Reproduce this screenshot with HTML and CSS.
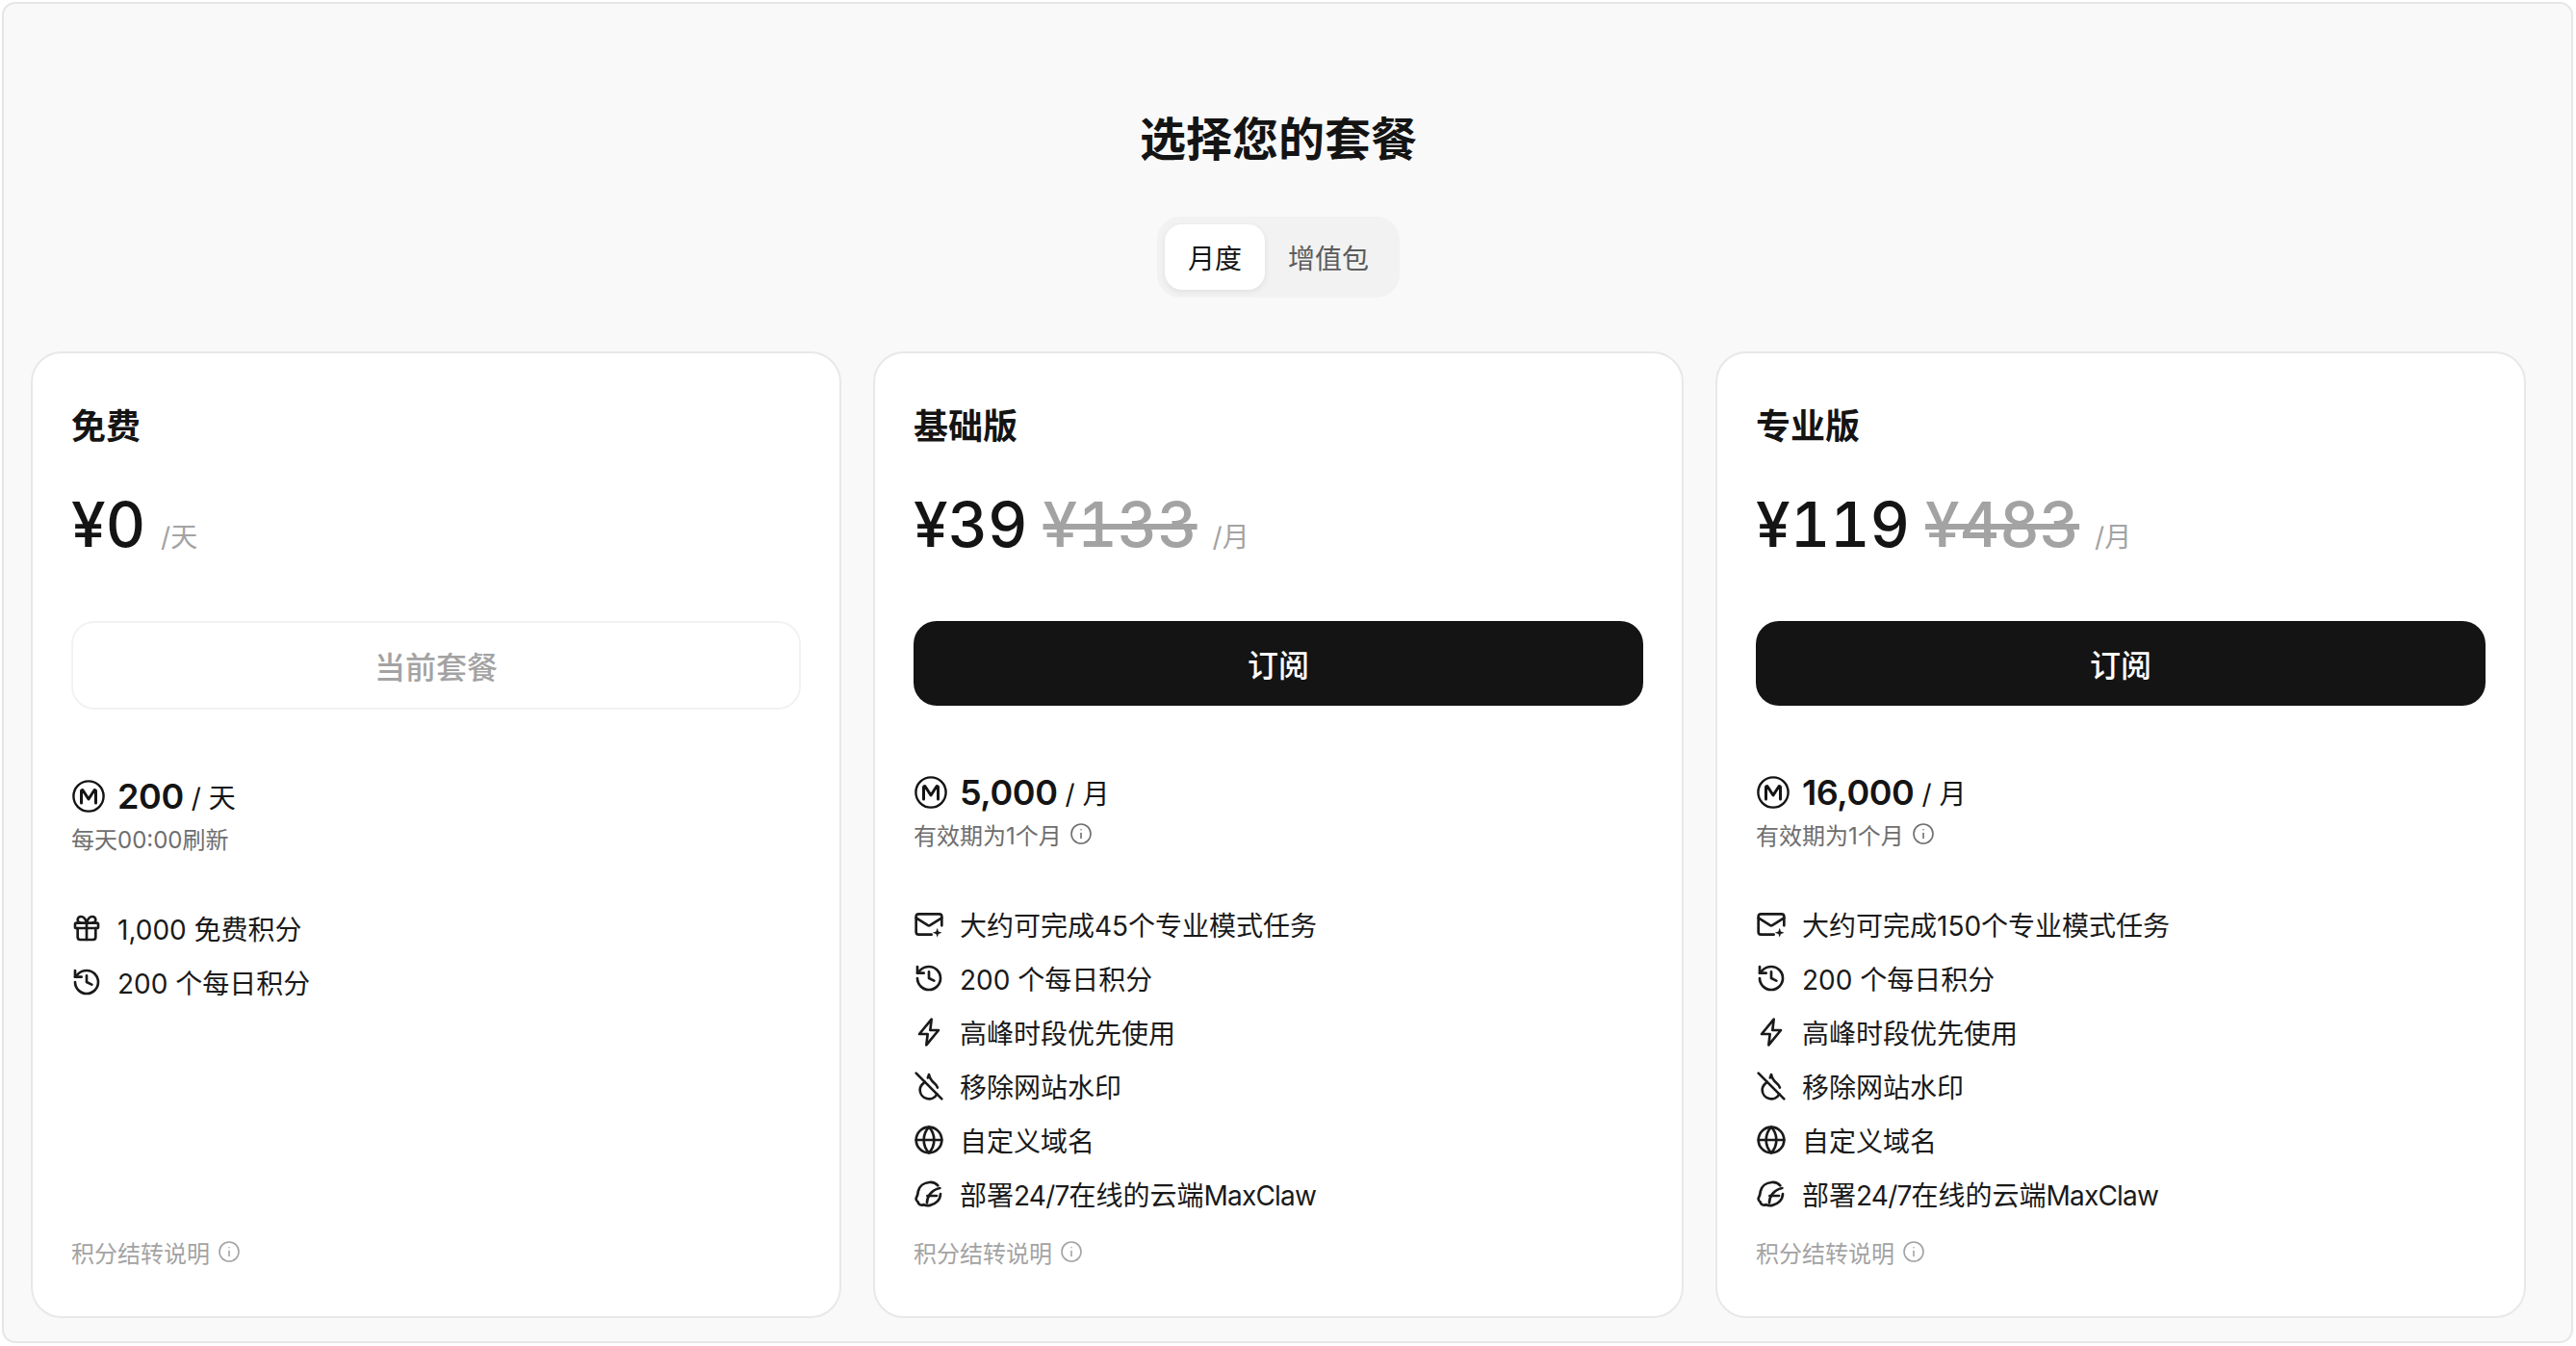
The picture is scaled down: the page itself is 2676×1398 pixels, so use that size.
FILE: index.html
```html
<!DOCTYPE html>
<html lang="zh-CN">
<head>
<meta charset="utf-8">
<title>选择您的套餐</title>
<link rel="stylesheet" href="styles.css">
</head>
<body>
<svg class="defs" width="0" height="0" aria-hidden="true">
  <symbol id="i-m" viewBox="0 0 36 36"><circle cx="18" cy="18" r="15.6" fill="none" stroke="currentColor" stroke-width="2.4"/><path d="M10.5 25V12.5c0-1 1.2-1.3 1.7-.5L18 21l5.8-9c.5-.8 1.7-.5 1.7.5V25" fill="none" stroke="currentColor" stroke-width="3" stroke-linecap="round" stroke-linejoin="round"/></symbol>
  <symbol id="i-info" viewBox="0 0 24 24"><circle cx="12" cy="12" r="10"/><path d="M12 16.5v-5"/><path d="M12 7.8h.01"/></symbol>
  <symbol id="i-mail" viewBox="0 0 24 24"><path d="M22 13V6a2 2 0 0 0-2-2H4a2 2 0 0 0-2 2v12a2 2 0 0 0 2 2h10"/><path d="m22 7-8.97 5.7a1.94 1.94 0 0 1-2.06 0L2 7"/><path class="fill" d="M18.5 14.8l.95 2.75 2.75.95-2.75.95-.95 2.75-.95-2.75-2.75-.95 2.75-.95z"/></symbol>
  <symbol id="i-history" viewBox="0 0 24 24"><path d="M3 12a9 9 0 1 0 9-9 9.75 9.75 0 0 0-6.74 2.74L3 8"/><path d="M3 3v5h5"/><path d="M12 7v5l4 2"/></symbol>
  <symbol id="i-zap" viewBox="0 0 24 24"><path d="M14 2 4.500 13.500H11L10 22l9.500-11.500H13z"/></symbol>
  <symbol id="i-drop" viewBox="0 0 24 24"><path d="M18.715 13.186C18.29 11.858 17.384 10.607 16 9.5c-2-1.6-3.5-4-4-6.5a10.7 10.7 0 0 1-.884 2.586"/><path d="m2 2 20 20"/><path d="M8.795 8.797A11 11 0 0 1 8 9.5C6 11.1 5 13 5 15a7 7 0 0 0 13.222 3.208"/></symbol>
  <symbol id="i-globe" viewBox="0 0 24 24"><circle cx="12" cy="12" r="10"/><path d="M12 2a14.5 14.5 0 0 0 0 20 14.5 14.5 0 0 0 0-20"/><path d="M2 12h20"/></symbol>
  <symbol id="i-gift" viewBox="0 0 24 24"><rect x="3" y="8" width="18" height="4" rx="1"/><path d="M12 8v13"/><path d="M19 12v7a2 2 0 0 1-2 2H7a2 2 0 0 1-2-2v-7"/><path d="M7.5 8a2.5 2.5 0 0 1 0-5A4.8 8 0 0 1 12 8a4.8 8 0 0 1 4.5-5 2.5 2.5 0 0 1 0 5"/></symbol>
  <symbol id="i-claw" viewBox="0 0 24 24"><path d="M19 5.500C17.300 3.600 15 2.800 12.500 3 8 3.300 4.500 6 3.600 10c-.3 1.500-.2 2.700-1 4-.9 1.600-.5 3.400.8 4.300.5 2.200 2.600 3 4.500 2.100 1.500.7 3.300.9 5 .5 4.700-.9 8-4.500 8.100-8.900"/><path d="M10.500 19c0-4.500 3-10 10-11.500"/><path d="M10.800 13.500h7.200"/></symbol>
</svg>
<main class="shell">
  <h1 class="title">选择您的套餐</h1>
  <div class="tabs">
    <button class="tab tab-active">月度</button>
    <button class="tab">增值包</button>
  </div>
  <section class="plans">
    <article class="plan">
      <h2 class="plan-name">免费</h2>
      <div class="price"><span class="amount">¥0</span><span class="unit">/天</span></div>
      <button class="cta cta-current">当前套餐</button>
      <div class="credits">
        <div class="credit-row"><svg class="m-icon"><use href="#i-m"/></svg><b class="credit-num">200</b><span class="credit-unit">/ 天</span></div>
        <div class="credit-note">每天00:00刷新</div>
      </div>
      <ul class="features">
        <li class="feature"><svg class="ficon"><use href="#i-gift"/></svg>1,000 免费积分</li>
        <li class="feature"><svg class="ficon"><use href="#i-history"/></svg>200 个每日积分</li>
      </ul>
      <div class="foot">积分结转说明<svg class="info"><use href="#i-info"/></svg></div>
    </article>
    <article class="plan">
      <h2 class="plan-name">基础版</h2>
      <div class="price"><span class="amount">¥39</span><s class="was">¥133</s><span class="unit">/月</span></div>
      <button class="cta">订阅</button>
      <div class="credits">
        <div class="credit-row"><svg class="m-icon"><use href="#i-m"/></svg><b class="credit-num">5,000</b><span class="credit-unit">/ 月</span></div>
        <div class="credit-note">有效期为1个月<svg class="info"><use href="#i-info"/></svg></div>
      </div>
      <ul class="features">
        <li class="feature"><svg class="ficon"><use href="#i-mail"/></svg>大约可完成45个专业模式任务</li>
        <li class="feature"><svg class="ficon"><use href="#i-history"/></svg>200 个每日积分</li>
        <li class="feature"><svg class="ficon"><use href="#i-zap"/></svg>高峰时段优先使用</li>
        <li class="feature"><svg class="ficon"><use href="#i-drop"/></svg>移除网站水印</li>
        <li class="feature"><svg class="ficon"><use href="#i-globe"/></svg>自定义域名</li>
        <li class="feature"><svg class="ficon"><use href="#i-claw"/></svg><span>部署<span class="tight">24/7</span>在线的云端<span class="tight">MaxClaw</span></span></li>
      </ul>
      <div class="foot">积分结转说明<svg class="info"><use href="#i-info"/></svg></div>
    </article>
    <article class="plan">
      <h2 class="plan-name">专业版</h2>
      <div class="price"><span class="amount">¥119</span><s class="was">¥483</s><span class="unit">/月</span></div>
      <button class="cta">订阅</button>
      <div class="credits">
        <div class="credit-row"><svg class="m-icon"><use href="#i-m"/></svg><b class="credit-num">16,000</b><span class="credit-unit">/ 月</span></div>
        <div class="credit-note">有效期为1个月<svg class="info"><use href="#i-info"/></svg></div>
      </div>
      <ul class="features">
        <li class="feature"><svg class="ficon"><use href="#i-mail"/></svg>大约可完成150个专业模式任务</li>
        <li class="feature"><svg class="ficon"><use href="#i-history"/></svg>200 个每日积分</li>
        <li class="feature"><svg class="ficon"><use href="#i-zap"/></svg>高峰时段优先使用</li>
        <li class="feature"><svg class="ficon"><use href="#i-drop"/></svg>移除网站水印</li>
        <li class="feature"><svg class="ficon"><use href="#i-globe"/></svg>自定义域名</li>
        <li class="feature"><svg class="ficon"><use href="#i-claw"/></svg><span>部署<span class="tight">24/7</span>在线的云端<span class="tight">MaxClaw</span></span></li>
      </ul>
      <div class="foot">积分结转说明<svg class="info"><use href="#i-info"/></svg></div>
    </article>
  </section>
</main>
</body>
</html>
```

FILE: styles.css
```css
* { box-sizing: border-box; }
html, body { margin: 0; height: 100%; background: #fff; }
body {
  padding: 2px 3px 3px 2px;
  font-family: Inter, "Noto Sans CJK SC", sans-serif;
  color: #141414;
}
.defs { position: absolute; }
.shell {
  height: 100%;
  display: flex;
  flex-direction: column;
  align-items: center;
  background: #f9f9f9;
  border: 2px solid #e6e6e6;
  border-radius: 14px;
  padding: 111px 47px 24px 28px;
}
.title {
  margin: 0;
  font-size: 48px;
  line-height: 60px;
  font-weight: 700;
}
.tabs {
  display: flex;
  margin-top: 50px;
  padding: 8px;
  background: #f2f2f2;
  border-radius: 24px;
}
.tab {
  height: 68px;
  padding: 0 24px;
  border: 0;
  border-radius: 18px;
  background: transparent;
  font: inherit;
  font-size: 28px;
  color: #5c5c5c;
}
.tab-active {
  background: #fff;
  color: #141414;
  box-shadow: 0 2px 6px rgba(0, 0, 0, .08);
}
.plans {
  align-self: stretch;
  flex: 1;
  display: grid;
  grid-template-columns: repeat(3, 1fr);
  gap: 33px;
  margin-top: 56px;
}
.plan {
  display: flex;
  flex-direction: column;
  background: #fff;
  border: 2px solid #e8e8e8;
  border-radius: 32px;
  padding: 51px 40px 49px;
}
.plan-name {
  margin: 0;
  font-size: 36px;
  line-height: 50px;
  font-weight: 700;
}
.price {
  display: flex;
  align-items: baseline;
  margin-top: 41px;
  height: 72px;
  line-height: 72px;
  font-variant-numeric: tabular-nums;
}
.amount { font-size: 64px; font-weight: 500; }
.was {
  margin-left: 16px;
  font-size: 64px;
  font-weight: 500;
  color: #a3a3a3;
}
.unit { margin-left: 16px; font-size: 28px; color: #a3a3a3; }
.cta {
  height: 88px;
  margin-top: 64px;
  border: 0;
  border-radius: 24px;
  background: #141414;
  color: #fff;
  font: inherit;
  font-size: 32px;
  font-weight: 500;
}
.cta-current {
  height: 92px;
  background: #fff;
  border: 2px solid #f2f2f2;
  color: #a3a3a3;
}
.credits { margin-top: 68px; }
.credit-row { display: flex; align-items: center; height: 44px; }
.m-icon { width: 36px; height: 36px; margin-right: 12px; color: #141414; }
.credit-num { font-size: 36px; font-weight: 600; letter-spacing: -.4px; }
.credit-unit { margin-left: 8px; font-size: 28px; }
.credit-note {
  display: flex;
  align-items: center;
  margin-top: 3px;
  height: 36px;
  font-size: 24px;
  color: #6e6e6e;
}
.features {
  list-style: none;
  margin: 56px 0 0;
  padding: 0;
  display: flex;
  flex-direction: column;
  gap: 16px;
}
.feature {
  display: flex;
  align-items: center;
  gap: 16px;
  height: 40px;
  font-size: 28px;
  color: #1a1a1a;
}
.tight { letter-spacing: -.8px; }
.ficon {
  width: 32px;
  height: 32px;
  fill: none;
  stroke: currentColor;
  stroke-width: 2;
  stroke-linecap: round;
  stroke-linejoin: round;
}
.fill { fill: currentColor; stroke: none; }
.info {
  width: 24px;
  height: 24px;
  margin-left: 8px;
  fill: none;
  stroke: currentColor;
  stroke-width: 1.6;
  stroke-linecap: round;
}
.foot {
  display: flex;
  align-items: center;
  margin-top: auto;
  height: 36px;
  font-size: 24px;
  color: #a3a3a3;
}
```
